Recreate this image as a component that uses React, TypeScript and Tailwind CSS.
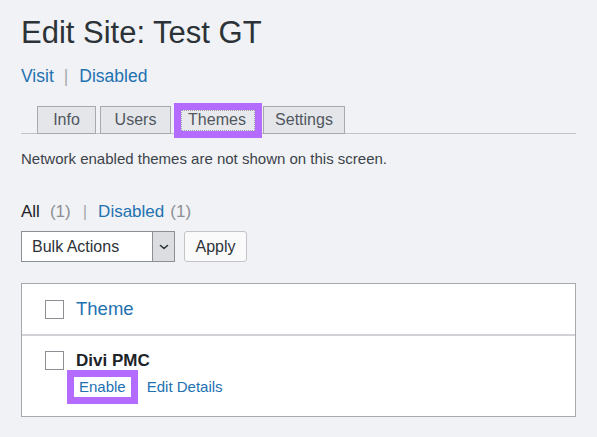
import React from "react";

export default function App() {
  return (
    <div className="min-h-[437px] bg-[#f1f2f5] px-[21px] font-['Liberation_Sans',Arial,sans-serif] text-[#3c434a]">
      <h1 className="pt-[15px] text-[31px] leading-[36px] font-normal text-[#2c3338]">
        Edit Site: Test GT
      </h1>

      <div className="mt-[13px] flex items-center text-[17.5px] leading-[24px]">
        <a className="text-[#2271b1]">Visit</a>
        <span className="ml-[10px] mr-[11px] text-[#a7aaad]">|</span>
        <a className="text-[#2271b1]">Disabled</a>
      </div>

      <div className="mt-[18px] flex gap-[4px] border-b border-[#c3c4c7] pl-[16px] text-[16px] text-[#50575e]">
        <div className="-mb-px flex h-[28px] w-[59px] items-center justify-center border border-[#a7aaad] bg-[#e5e6ea] leading-[26px]">
          Info
        </div>
        <div className="-mb-px flex h-[28px] w-[71px] items-center justify-center border border-[#a7aaad] bg-[#e5e6ea] leading-[26px]">
          Users
        </div>
        <div className="relative -mb-px flex h-[28px] w-[84px] items-center justify-center border border-[#a7aaad] bg-[#e8e9ec] leading-[26px]">
          Themes
          <div className="pointer-events-none absolute -left-[2px] -top-[4px] h-[35px] w-[88px] border-[7px] border-[#b46cff]" />
          <div className="pointer-events-none absolute left-[5px] top-[3px] h-[21px] w-[74px] border border-dotted border-[#9ca1a7]" />
        </div>
        <div className="-mb-px flex h-[28px] w-[82px] items-center justify-center border border-[#a7aaad] bg-[#e5e6ea] leading-[26px]">
          Settings
        </div>
      </div>

      <p className="mt-[15px] text-[15px] leading-[20px] text-[#3c434a]">
        Network enabled themes are not shown on this screen.
      </p>

      <div className="mt-[31px] flex items-center text-[17px] leading-[24px]">
        <span className="text-[#1d2327]">All</span>
        <span className="ml-[10px] text-[#8c8f94]">(1)</span>
        <span className="ml-[12px] mr-[11px] text-[#a7aaad]">|</span>
        <a className="text-[#2271b1]">Disabled</a>
        <span className="ml-[6px] text-[#8c8f94]">(1)</span>
      </div>

      <div className="mt-[7px] flex items-center">
        <div className="flex h-[31px] w-[154px] border border-[#8c8f94] bg-white">
          <div className="flex flex-1 items-center pl-[10px] text-[16px] text-[#2c3338]">
            Bulk Actions
          </div>
          <div className="flex w-[22px] items-center justify-center border-l border-[#8c8f94] bg-[#dcdde1]">
            <svg width="10" height="6" viewBox="0 0 10 6" fill="none">
              <path d="M1.5 1.5 L5 4.5 L8.5 1.5" stroke="#2c3338" strokeWidth="1.6" strokeLinecap="round" strokeLinejoin="round" />
            </svg>
          </div>
        </div>
        <div className="ml-[9px] flex h-[31px] w-[63px] items-center justify-center rounded-[3px] border border-[#c3c4c7] bg-[#fafafb] text-[16px] text-[#2c3338]">
          Apply
        </div>
      </div>

      <div className="mt-[21px] border border-[#a7aaad] bg-white">
        <div className="flex h-[50px] items-center pl-[23px]">
          <div className="h-[19px] w-[19px] border border-[#8c8f94] bg-white" />
          <a className="ml-[12px] text-[18.5px] leading-[24px] text-[#2271b1]">Theme</a>
        </div>
        <div className="h-[2px] bg-[#d0d2d6]" />
        <div className="flex h-[80px] items-start pl-[23px] pt-[14px]">
          <div className="mt-[1px] h-[19px] w-[19px] border border-[#8c8f94] bg-white" />
          <div className="ml-[12px] flex flex-col">
            <div className="text-[17px] font-bold leading-[22px] text-[#1d2327]">Divi PMC</div>
            <div className="mt-[5px] flex text-[15px] leading-[20px]">
              <a className="relative ml-[3px] text-[#2271b1]">
                Enable
                <span className="pointer-events-none absolute -left-[12px] -right-[12px] -top-[7px] -bottom-[7px] border-[7px] border-[#b46cff]" />
              </a>
              <a className="ml-[21px] text-[#2271b1]">Edit Details</a>
            </div>
          </div>
        </div>
      </div>
    </div>
  );
}
